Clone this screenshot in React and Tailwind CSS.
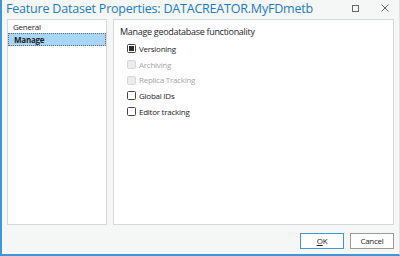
import React from 'react';

function Check({ checked, disabled, label }) {
  return (
    <div className={`flex items-center gap-[3px] h-[15.7px] ${disabled ? 'text-[#a6a6a6]' : 'text-[#1e1e1e]'}`}>
      <span
        className={`w-[9px] h-[9px] rounded-[1.5px] border flex items-center justify-center ${
          disabled ? 'border-[#d6d6d6] bg-[#ebebeb]' : 'border-[#444] bg-white'
        }`}
      >
        {checked && <span className="w-[5px] h-[5px] bg-[#2b2b2b]" />}
      </span>
      <span>{label}</span>
    </div>
  );
}

export default function App() {
  return (
    <div
      className="w-[400px] h-[256px] bg-[#f5f6f6] border-l-2 border-b-2 border-r border-l-[#3d97d8] border-b-[#3d97d8] border-r-[#e2e2e2] flex flex-col text-[8px] tracking-[-0.25px] font-medium"
      style={{ fontFamily: '"Open Sans", "Noto Sans", sans-serif' }}
    >
      {/* title bar */}
      <div className="h-[19px] flex items-center pl-[4px] pr-[10px]">
        <span className="text-[12.5px] font-normal text-[#1b7cc2] leading-none tracking-[-0.2px]">
          Feature Dataset Properties: DATACREATOR.MyFDmetb
        </span>
        <div className="ml-auto flex items-center gap-[22px] pb-[3px]">
          <span className="w-[7px] h-[7px] border border-[#666]" />
          <svg width="8" height="8" viewBox="0 0 8 8">
            <path d="M0.5 0.5L7.5 7.5M7.5 0.5L0.5 7.5" stroke="#666" strokeWidth="1" />
          </svg>
        </div>
      </div>

      {/* body */}
      <div className="flex-1 flex gap-[6px] pl-[5px] pr-[5px]">
        <div className="w-[100px] bg-white border border-[#d8d8d8] flex flex-col">
          <div className="h-[13px] flex items-center pl-[5px] text-[#1e1e1e]">General</div>
          <div className="h-[13px] bg-[#a9d5f7] border border-dotted border-[#5a6b78] flex items-center pl-[5px] font-bold text-[#1e1e1e]">
            Manage
          </div>
        </div>
        <div className="flex-1 bg-white border border-[#d8d8d8] pl-[6px] pt-[6px]">
          <div className="text-[9px] leading-[11px] tracking-[-0.3px] text-[#1e1e1e] mb-[4px]">Manage geodatabase functionality</div>
          <div className="pl-[7px] flex flex-col">
            <Check checked label="Versioning" />
            <Check disabled label="Archiving" />
            <Check disabled label="Replica Tracking" />
            <Check label="Global IDs" />
            <Check label="Editor tracking" />
          </div>
        </div>
      </div>

      {/* footer */}
      <div className="h-[29px] flex items-center justify-end gap-[6px] pr-[5px] pt-[3px]">
        <button className="w-[44px] h-[16px] bg-white border border-[#3d97d8] text-[#1e1e1e] flex items-center justify-center">
          <span className="underline">O</span>K
        </button>
        <button className="w-[44px] h-[16px] bg-white border border-[#9a9a9a] text-[#1e1e1e] flex items-center justify-center">
          Cancel
        </button>
      </div>
    </div>
  );
}
